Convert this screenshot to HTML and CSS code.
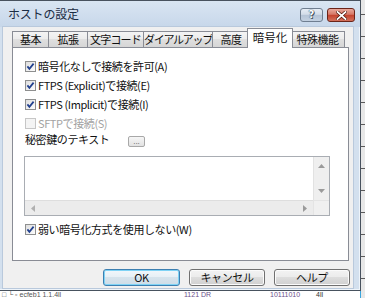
FILE: index.html
```html
<!DOCTYPE html>
<html lang="ja">
<head>
<meta charset="utf-8">
<title>ホストの設定</title>
<link rel="stylesheet" href="styles.css">
</head>
<body>
<svg class="defs" width="0" height="0" aria-hidden="true">
  <defs>
    <linearGradient id="cbfill" x1="0" y1="0" x2="1" y2="1">
      <stop offset="0" stop-color="#dcdcdc"/>
      <stop offset="1" stop-color="#ffffff"/>
    </linearGradient>
  </defs>
</svg>
<div class="desktop">
  <div class="behind">
    <div class="behind-side"></div>
    <div class="behind-row">
      <span class="b1">□ └ ▫ ecfeb1 1.1.4ll</span>
      <span class="b2">1121 DR</span>
      <span class="b3">10111010</span>
      <span class="b4">4ll</span>
    </div>
  </div>

  <div class="window">
    <div class="titlebar">
      <span class="title">ホストの設定</span>
      <div class="caption-buttons">
        <div class="cap cap-help">?</div>
        <div class="cap cap-close">
          <svg width="11" height="9" viewBox="0 0 11 9"><path d="M1.5 1 L9.5 8 M9.5 1 L1.5 8" stroke="#4a1208" stroke-width="3.2" stroke-linecap="square"/><path d="M1.5 1 L9.5 8 M9.5 1 L1.5 8" stroke="#ffffff" stroke-width="1.8" stroke-linecap="square"/></svg>
        </div>
      </div>
    </div>

    <div class="client">
      <div class="tabs">
        <div class="tab">基本</div>
        <div class="tab">拡張</div>
        <div class="tab">文字コード</div>
        <div class="tab">ダイアルアップ</div>
        <div class="tab">高度</div>
        <div class="tab tab-selected">暗号化</div>
        <div class="tab">特殊機能</div>
      </div>

      <div class="panel">
        <div class="check">
          <svg class="cb" width="11" height="11" viewBox="0 0 11 11"><rect x="0.5" y="0.5" width="10" height="10" fill="url(#cbfill)" stroke="#8e8f8f"/><path d="M2.4 5.4 L4.4 7.9 L8.6 2.6" fill="none" stroke="#21408e" stroke-width="1.7"/></svg>
          <span>暗号化なしで接続を許可(A)</span>
        </div>
        <div class="check">
          <svg class="cb" width="11" height="11" viewBox="0 0 11 11"><rect x="0.5" y="0.5" width="10" height="10" fill="url(#cbfill)" stroke="#8e8f8f"/><path d="M2.4 5.4 L4.4 7.9 L8.6 2.6" fill="none" stroke="#21408e" stroke-width="1.7"/></svg>
          <span>FTPS (Explicit)で接続(E)</span>
        </div>
        <div class="check">
          <svg class="cb" width="11" height="11" viewBox="0 0 11 11"><rect x="0.5" y="0.5" width="10" height="10" fill="url(#cbfill)" stroke="#8e8f8f"/><path d="M2.4 5.4 L4.4 7.9 L8.6 2.6" fill="none" stroke="#21408e" stroke-width="1.7"/></svg>
          <span>FTPS (Implicit)で接続(I)</span>
        </div>
        <div class="check check-disabled">
          <svg class="cb" width="11" height="11" viewBox="0 0 11 11"><rect x="0.5" y="0.5" width="10" height="10" fill="#f4f4f4" stroke="#c6c6c6"/></svg>
          <span>SFTPで接続(S)</span>
        </div>
        <div class="keyrow">
          <span class="key-label">秘密鍵のテキスト</span>
          <div class="dots">...</div>
        </div>
        <div class="textbox">
          <div class="tb-text"></div>
          <div class="vscroll">
            <svg width="7" height="4" viewBox="0 0 7 4"><path d="M0 4 L3.5 0 L7 4 Z" fill="#9a9a9a"/></svg>
            <svg width="7" height="4" viewBox="0 0 7 4"><path d="M0 0 L3.5 4 L7 0 Z" fill="#9a9a9a"/></svg>
          </div>
          <div class="hscroll">
            <svg width="4" height="7" viewBox="0 0 4 7"><path d="M4 0 L0 3.5 L4 7 Z" fill="#b0b0b0"/></svg>
            <svg width="4" height="7" viewBox="0 0 4 7"><path d="M0 0 L4 3.5 L0 7 Z" fill="#9a9a9a"/></svg>
          </div>
          <div class="corner"></div>
        </div>
        <div class="check check-last">
          <svg class="cb" width="11" height="11" viewBox="0 0 11 11"><rect x="0.5" y="0.5" width="10" height="10" fill="url(#cbfill)" stroke="#8e8f8f"/><path d="M2.4 5.4 L4.4 7.9 L8.6 2.6" fill="none" stroke="#21408e" stroke-width="1.7"/></svg>
          <span>弱い暗号化方式を使用しない(W)</span>
        </div>
      </div>

      <div class="buttons">
        <div class="btn btn-default btn-ok">OK</div>
        <div class="btn">キャンセル</div>
        <div class="btn">ヘルプ</div>
      </div>
    </div>
  </div>
</div>
</body>
</html>
```
FILE: styles.css
```css
html, body {
  margin: 0;
  padding: 0;
}
body {
  width: 365px;
  height: 298px;
  overflow: hidden;
  font-family: "Noto Sans CJK JP", sans-serif;
  font-size: 11px;
  letter-spacing: -0.4px;
  color: #111;
  background: #ffffff;
}
.defs {
  position: absolute;
}
.desktop {
  position: relative;
  width: 365px;
  height: 298px;
  overflow: hidden;
}

/* window behind the dialog */
.behind {
  position: absolute;
  inset: 0;
  background: #ffffff;
}
.behind-side {
  position: absolute;
  top: 0;
  right: 0;
  width: 4px;
  height: 100%;
  border-left: 1px solid #3aa6dd;
  background: repeating-linear-gradient(#e8e8e8 0, #e8e8e8 14px, #5a5a5a 14px, #5a5a5a 15px, #e8e8e8 15px, #e8e8e8 22px);
}
.behind-row {
  position: absolute;
  left: 0;
  top: 291px;
  width: 361px;
  height: 7px;
  line-height: 7px;
  font-family: "Liberation Sans", sans-serif;
  font-size: 7px;
  letter-spacing: 0;
  color: #333;
  white-space: nowrap;
}
.behind-row span {
  position: absolute;
  top: 0;
}
.behind-row .b1 { left: 2px; color: #555; }
.behind-row .b2 { left: 184px; color: #6b4f8a; }
.behind-row .b3 { left: 270px; color: #6b4f8a; }
.behind-row .b4 { left: 316px; }

/* dialog window */
.window {
  position: absolute;
  left: -5px;
  top: 0;
  width: 366px;
  height: 291px;
  box-sizing: border-box;
  border: 1px solid #48525e;
  background: #d3e0ee;
  display: flex;
  flex-direction: column;
  box-shadow: inset 0 0 0 1px #eef4fa;
}
.titlebar {
  height: 26px;
  flex: none;
  display: flex;
  align-items: flex-start;
  padding-left: 12px;
  background: linear-gradient(#d9e5f2, #c7d7ea);
}
.title {
  margin-top: 6px;
  line-height: 13px;
  font-size: 12px;
  letter-spacing: -0.2px;
  color: #1c2d44;
}
.caption-buttons {
  margin-left: auto;
  margin-top: 7px;
  margin-right: 5px;
  display: flex;
  gap: 4px;
}
.cap {
  height: 14px;
  box-sizing: border-box;
  border-radius: 3px;
  display: flex;
  align-items: center;
  justify-content: center;
}
.cap-help {
  width: 23px;
  border: 1px solid #6f7e90;
  background: linear-gradient(#e6edf5 0%, #d2dce8 45%, #b5c4d6 50%, #c3d1e1 100%);
  color: #fff;
  font-family: "DejaVu Sans", sans-serif;
  font-weight: bold;
  font-size: 10px;
  line-height: 12px;
  letter-spacing: 0;
  text-shadow: 0 0 1px #304050, 0 0 1px #304050, 1px 1px 0 #4a5a6c;
}
.cap-close {
  width: 28px;
  border: 1px solid #6b2418;
  background: linear-gradient(#e9a99c 0%, #d67867 45%, #c4412c 50%, #d3715c 100%);
}

.client {
  flex: 1;
  margin: 0 7px 2px 7px;
  background: #f0f0f0;
  padding: 1px 3px 0 9px;
  display: flex;
  flex-direction: column;
  box-shadow: 0 0 0 1px #b9c9dc;
}

/* tabs */
.tabs {
  height: 19px;
  display: flex;
  align-items: flex-end;
  flex: none;
}
.tab {
  height: 16px;
  box-sizing: border-box;
  border: 1px solid #898c95;
  border-bottom: none;
  margin-left: -1px;
  background: linear-gradient(#f4f4f4 0%, #ebebeb 50%, #dfdfdf 50%, #d6d6d6 100%);
  text-align: center;
  line-height: 15px;
  white-space: nowrap;
  overflow: hidden;
  color: #111;
  letter-spacing: -0.5px;
}
.tab:nth-child(1) { margin-left: 0; width: 37px; }
.tab:nth-child(2) { width: 40px; }
.tab:nth-child(3) { width: 57px; letter-spacing: -0.8px; }
.tab:nth-child(4) { width: 70px; letter-spacing: -1.3px; }
.tab:nth-child(5) { width: 38px; }
.tab:nth-child(7) { width: 55px; margin-left: -3px; }
.tab.tab-selected {
  width: 46px;
  height: 20px;
  margin-left: -3px;
  margin-bottom: -1px;
  background: #ffffff;
  position: relative;
  z-index: 1;
  line-height: 16px;
  font-size: 11.5px;
  letter-spacing: 0;
}

/* panel */
.panel {
  width: 337px;
  height: 214px;
  box-sizing: border-box;
  border: 1px solid #898c95;
  background: #ffffff;
  padding: 9px 0 0 12px;
  flex: none;
}
.check {
  height: 19px;
  display: flex;
  align-items: center;
  gap: 2px;
  white-space: nowrap;
}
.check .cb {
  flex: none;
}
.check span {
  line-height: 13px;
}
.check-disabled {
  color: #a3a3a3;
}
.keyrow {
  height: 17px;
  display: flex;
  align-items: flex-start;
}
.key-label {
  width: 103px;
  line-height: 12px;
  white-space: nowrap;
}
.dots {
  margin-top: 3px;
  width: 17px;
  height: 11px;
  box-sizing: border-box;
  border: 1px solid #a8a8a8;
  border-radius: 2px;
  background: linear-gradient(#f6f6f6, #e2e2e2);
  font-family: "Liberation Sans", sans-serif;
  font-size: 8px;
  line-height: 9px;
  letter-spacing: 0;
  text-align: center;
  color: #555;
}
.textbox {
  margin-top: 6px;
  margin-left: -1px;
  width: 306px;
  height: 60px;
  box-sizing: border-box;
  border: 1px solid #a9adb3;
  background: #fff;
  display: grid;
  grid-template-columns: 1fr 16px;
  grid-template-rows: 1fr 15px;
}
.tb-text {
  background: #fff;
}
.vscroll {
  background: #efefef;
  border-left: 1px solid #e2e2e2;
  display: flex;
  flex-direction: column;
  align-items: center;
  justify-content: space-between;
  padding: 7px 0 7px 0;
}
.hscroll {
  background: #ececec;
  border-top: 1px solid #dedede;
  display: flex;
  align-items: center;
  justify-content: space-between;
  padding: 0 6px 0 6px;
}
.corner {
  background: #f0f0f0;
  border-top: 1px solid #e4e4e4;
  border-left: 1px solid #e4e4e4;
}
.check-last {
  margin-top: 4px;
}

/* bottom buttons */
.buttons {
  margin-top: 8px;
  display: flex;
  justify-content: flex-end;
  gap: 9px;
}
.btn {
  width: 76px;
  height: 17px;
  box-sizing: border-box;
  border: 1px solid #707070;
  border-radius: 3px;
  background: linear-gradient(#f3f3f3 0%, #ebebeb 50%, #dddddd 50%, #d0d0d0 100%);
  box-shadow: inset 0 0 0 1px #fbfbfb;
  text-align: center;
  line-height: 15px;
  white-space: nowrap;
}
.btn-ok {
  width: 77px;
}
.btn-default {
  border-color: #3c7fb1;
  box-shadow: inset 0 0 0 1px #7fd3f5;
  background: linear-gradient(#f1f7fb 0%, #e6eff5 50%, #d6e3ec 50%, #cddde8 100%);
}
```
